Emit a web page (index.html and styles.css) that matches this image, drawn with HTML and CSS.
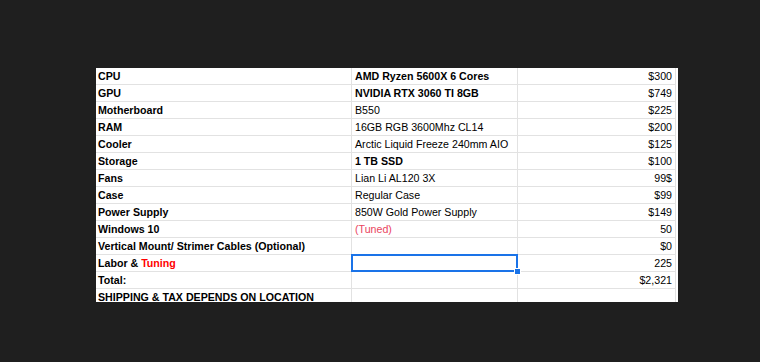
FILE: index.html
```html
<!DOCTYPE html>
<html>
<head>
<meta charset="utf-8">
<link rel="stylesheet" href="styles.css">
</head>
<body>
<div class="sheet">
  <div class="grid">
    <div class="c b">CPU</div><div class="c b">AMD Ryzen 5600X 6 Cores</div><div class="c r">$300</div>
    <div class="c b">GPU</div><div class="c b">NVIDIA RTX 3060 TI 8GB</div><div class="c r">$749</div>
    <div class="c b">Motherboard</div><div class="c">B550</div><div class="c r">$225</div>
    <div class="c b">RAM</div><div class="c">16GB RGB 3600Mhz CL14</div><div class="c r">$200</div>
    <div class="c b">Cooler</div><div class="c">Arctic Liquid Freeze 240mm AIO</div><div class="c r">$125</div>
    <div class="c b">Storage</div><div class="c b">1 TB SSD</div><div class="c r">$100</div>
    <div class="c b">Fans</div><div class="c">Lian Li AL120 3X</div><div class="c r">99$</div>
    <div class="c b">Case</div><div class="c">Regular Case</div><div class="c r">$99</div>
    <div class="c b">Power Supply</div><div class="c">850W Gold Power Supply</div><div class="c r">$149</div>
    <div class="c b">Windows 10</div><div class="c tuned">(Tuned)</div><div class="c r">50</div>
    <div class="c b">Vertical Mount/ Strimer Cables (Optional)</div><div class="c"></div><div class="c r">$0</div>
    <div class="c b">Labor &amp; <span class="red">Tuning</span></div><div class="c sel"></div><div class="c r">225</div>
    <div class="c b">Total:</div><div class="c"></div><div class="c r">$2,321</div>
    <div class="c b">SHIPPING &amp; TAX DEPENDS ON LOCATION</div><div class="c"></div><div class="c r"></div>
  </div>
</div>
</body>
</html>
```
FILE: styles.css
```css
html, body {
  margin: 0;
  padding: 0;
  background: #1f1f1f;
}
.sheet {
  margin: 68px 0 0 96px;
  width: 582px;
  height: 234px;
  overflow: hidden;
  background: #ffffff;
}
.grid {
  display: grid;
  grid-template-columns: 256px 166px 158px;
  font-family: "Liberation Sans", Arial, sans-serif;
  font-size: 10.65px;
  color: #000;
}
.c {
  position: relative;
  height: 16px;
  line-height: 16px;
  padding: 0 3px 0 3px;
  border-bottom: 1px solid #e2e2e2;
  border-right: 1px solid #e2e2e2;
  white-space: nowrap;
  overflow: visible;
}
.grid > .c:nth-child(3n+1) { padding-left: 2px; }
.b { font-weight: bold; }
.r { text-align: right; }
.red { color: #ff0000; }
.tuned { color: #ea4660; }
.sel::after {
  content: "";
  position: absolute;
  left: -1px;
  top: -1px;
  right: -1px;
  bottom: -1px;
  border: 2px solid #1a73e8;
}
.sel::before {
  content: "";
  position: absolute;
  right: -4px;
  bottom: -4px;
  width: 5px;
  height: 5px;
  background: #1a73e8;
  border: 1px solid #fff;
  z-index: 2;
}
```
